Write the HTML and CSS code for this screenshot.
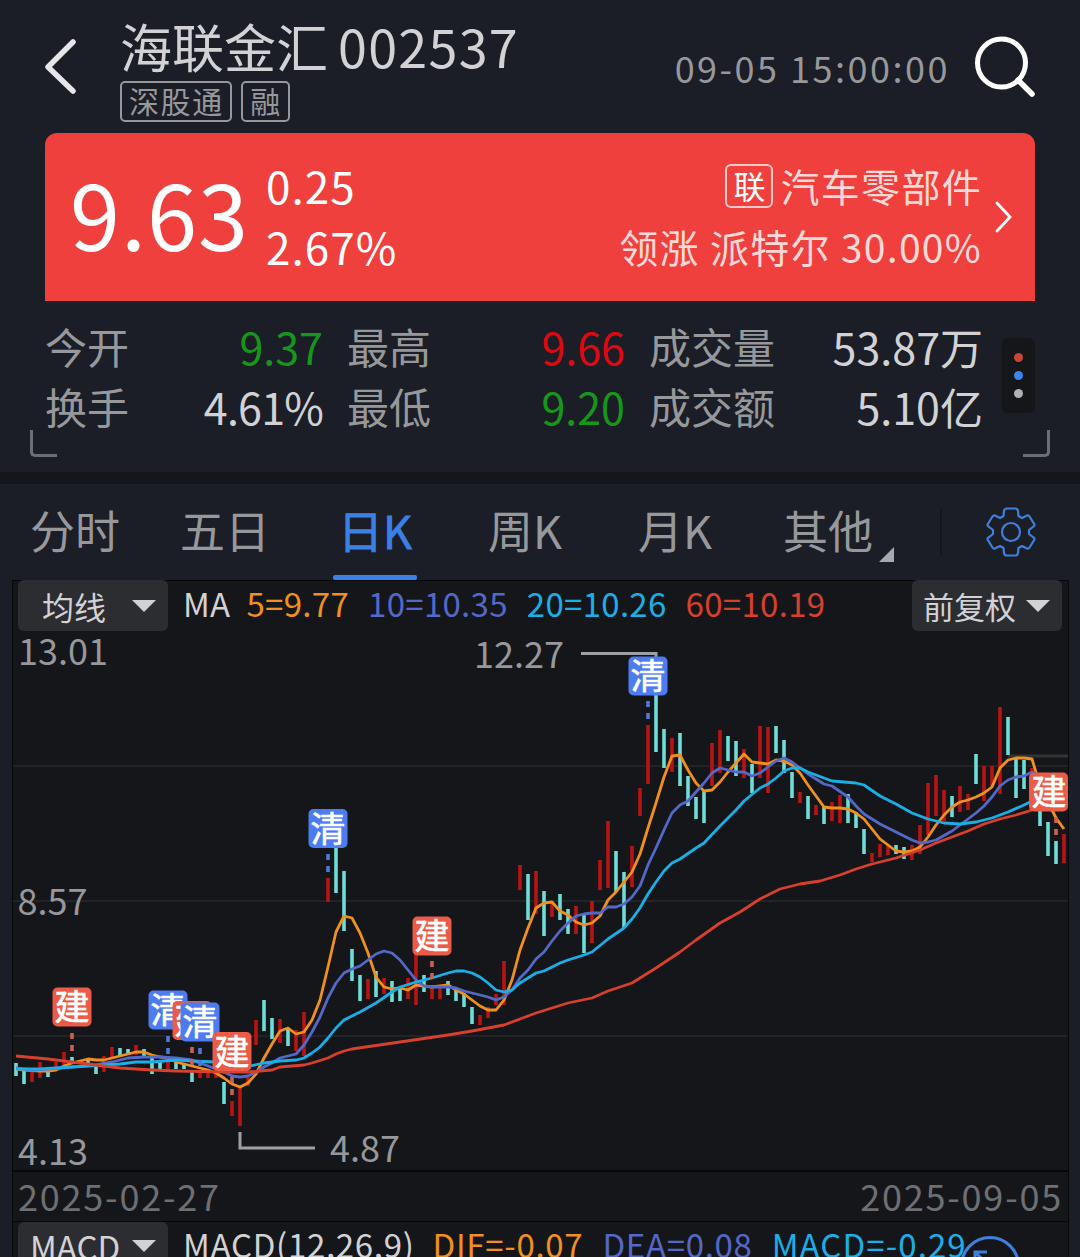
FILE: index.html
```html
<!DOCTYPE html>
<html lang="zh-CN">
<head>
    <meta charset="UTF-8">
    <title>海联金汇 002537</title>
    <link rel="stylesheet" href="styles.css">
</head>
<body>
    <div class="header">
        <svg class="back" width="34" height="56" viewBox="0 0 34 56">
            <path d="M28 3L3 28L28 52" fill="none" stroke="#e6e6e8" stroke-width="5.5" stroke-linecap="round" stroke-linejoin="round"/>
        </svg>
        <div class="title-box">
            <div class="title">海联金汇<span class="code">002537</span></div>
            <div class="tags">
                <span class="tag">深股通</span>
                <span class="tag">融</span>
            </div>
        </div>
        <div class="time">09-05 15:00:00</div>
        <svg class="search" width="62" height="62" viewBox="0 0 62 62">
            <circle cx="28.500" cy="28" r="24" fill="none" stroke="#fff" stroke-width="5"/>
            <path d="M45 45L59 59" stroke="#fff" stroke-width="5.500" stroke-linecap="round"/>
        </svg>
    </div>

    <!-- 现价 -->
    <div class="banner">
        <div class="price">9.63</div>
        <div class="change">
            <div>0.25</div>
            <div>2.67%</div>
        </div>
        <div class="industry">
            <div><span class="link-tag">联</span>汽车零部件</div>
            <div>领涨 派特尔 30.00%</div>
        </div>
        <svg class="arrow" width="20" height="34" viewBox="0 0 20 34">
            <path d="M3 3L16 17L3 31" fill="none" stroke="#fff" stroke-width="2.800" stroke-linecap="round"/>
        </svg>
    </div>

    <div class="stats">
        <div class="stats-grid">
            <div class="stat"><span class="label">今开</span><span class="value down">9.37</span></div>
            <div class="stat"><span class="label">最高</span><span class="value up">9.66</span></div>
            <div class="stat"><span class="label">成交量</span><span class="value">53.87万</span></div>
            <div class="stat"><span class="label">换手</span><span class="value pct">4.61%</span></div>
            <div class="stat"><span class="label">最低</span><span class="value down">9.20</span></div>
            <div class="stat"><span class="label">成交额</span><span class="value">5.10亿</span></div>
        </div>
        <div class="more"><i class="dot red"></i><i class="dot blue"></i><i class="dot"></i></div>
        <i class="corner left"></i>
        <i class="corner right"></i>
    </div>

    <div class="tabs">
        <div class="tab">分时</div>
        <div class="tab">五日</div>
        <div class="tab active">日K</div>
        <div class="tab">周K</div>
        <div class="tab">月K</div>
        <div class="tab other">其他</div>
        <div class="setting">
            <svg width="52" height="52" viewBox="-26 -26 52 52" fill="none" stroke="#3f80dc" stroke-width="2.200" stroke-linejoin="round">
                <path d="M-7 -21Q-6.500 -23.500 -4.500 -23.500H4.500Q6.500 -23.500 7 -21L7.500 -16L11 -14L16 -16.500Q17.500 -17 18.500 -15.500L23.200 -8Q24 -6.500 22.500 -5.500L18 -2V2L22.500 5.500Q24 6.500 23.200 8L18.500 15.500Q17.500 17 16 16.500L11 14L7.500 16L7 21Q6.500 23.500 4.500 23.500H-4.500Q-6.500 23.500 -7 21L-7.500 16L-11 14L-16 16.500Q-17.500 17 -18.500 15.500L-23.200 8Q-24 6.500 -22.500 5.500L-18 2V-2L-22.500 -5.500Q-24 -6.500 -23.200 -8L-18.500 -15.500Q-17.500 -17 -16 -16.500L-11 -14L-7.500 -16Z"/>
                <circle r="9"/>
            </svg>
        </div>
    </div>

    <div class="chart">
        <div class="bar">
            <div class="select">均线<i class="caret"></i></div>
            <span class="ind">MA</span>
            <span class="ind ma5">5=9.77</span>
            <span class="ind ma10">10=10.35</span>
            <span class="ind ma20">20=10.26</span>
            <span class="ind ma60">60=10.19</span>
            <div class="select fq">前复权<i class="caret"></i></div>
        </div>

        <!-- K线 -->
        <svg class="kline" width="1055" height="539" viewBox="13 631 1055 539">
            <path class="grid" d="M13 766H1068M13 901H1068M13 1036H1068"/>
            <path class="last" d="M1008 756H1068"/>
            <path class="k-up" d="M32 1072V1082M40 1062V1078M56 1062V1070M64 1052V1065M80 1060V1063M104 1056V1072M112 1047V1058M136 1045V1055M168 1058V1069M200 1072V1078M208 1072V1078M216 1072V1078M232 1101V1116M240 1087V1126M248 1077V1086M256 1020V1045M280 1019V1043M296 1030V1051M304 1012V1056M328 878V902M368 979V999M384 978V994M408 978V999M416 953V1005M432 985V999M440 987V999M480 1015V1025M488 1007V1018M496 994V1005M504 961V1005M520 865V890M536 871V914M552 903V917M576 906V934M592 901V943M600 860V890M608 821V888M632 846V887M640 788V816M648 725V784M672 738V772M712 743V786M720 730V773M744 749V778M760 726V778M768 727V793M800 792V803M816 805V815M832 802V821M840 795V823M872 853V862M880 844V857M888 846V855M912 845V860M920 825V854M928 783V835M936 775V816M944 790V821M960 786V812M968 794V810M984 766V801M992 766V786M1000 707V794M1032 768V800M1064 834V863"/>
            <path class="k-down" d="M16 1063V1076M24 1070V1084M48 1070V1077M72 1057V1063M88 1058V1063M96 1064V1074M120 1048V1056M128 1049V1055M144 1049V1058M152 1058V1074M160 1062V1069M176 1063V1069M184 1063V1069M192 1072V1082M224 1082V1104M264 1000V1031M272 1018V1039M288 1028V1046M336 847V893M344 871V931M352 949V981M360 975V1001M376 971V997M392 981V1002M400 987V1001M424 975V992M448 981V995M456 989V1001M464 993V1007M472 1007V1024M528 874V920M544 891V936M560 894V920M568 909V934M584 914V953M616 851V892M624 872V928M656 680V752M664 729V768M680 733V786M688 776V806M696 797V819M704 790V823M728 736V761M736 741V776M752 764V793M776 726V753M784 740V773M792 772V798M808 796V819M824 807V824M848 794V823M856 812V828M864 829V854M896 845V854M904 847V859M952 796V817M976 754V784M1008 717V755M1016 758V798M1024 760V789M1040 800V826M1048 822V856M1056 841V864"/>
            <polyline class="line ma5" points="16,1069 24,1070 40,1071 48,1071 56,1070 64,1066 72,1063 80,1061 88,1059 96,1060 104,1060 112,1058 120,1056 128,1054 136,1052 144,1052 152,1055 160,1057 168,1058 176,1062 184,1064 192,1066 200,1068 208,1070 216,1073 224,1078 232,1084 240,1087 248,1083 256,1074 264,1058 272,1044 280,1031 288,1028 296,1034 304,1032 312,1020 320,1000 328,967 336,932 344,916 352,918 360,933 368,953 376,977 384,987 392,989 400,988 408,990 416,985 424,986 432,987 440,986 448,985 456,990 464,994 472,1000 480,1006 488,1010 496,1010 504,1000 512,980 520,950 528,928 536,908 544,903 552,902 560,911 568,915 576,922 584,925 592,923 600,916 608,900 616,892 624,882 632,872 640,854 648,828 656,803 664,777 672,756 680,755 688,770 696,783 704,791 712,790 720,782 728,772 736,763 744,754 752,762 760,763 768,764 776,760 784,761 792,765 800,773 808,785 816,796 824,807 832,808 840,808 848,809 856,813 864,819 872,829 880,839 888,845 896,851 904,852 912,851 920,847 928,837 936,825 944,815 952,807 960,802 968,800 976,797 984,793 992,787 1000,768 1008,760 1016,758 1024,758 1032,759 1040,786 1048,802 1056,818 1064,829"/>
            <polyline class="line ma10" points="16,1068 32,1070 48,1069 72,1067 96,1065 112,1062 128,1058 144,1057 160,1057 176,1058 192,1060 208,1066 216,1069 224,1072 232,1076 240,1077 248,1076 256,1072 264,1067 272,1063 280,1058 288,1056 296,1054 304,1045 312,1032 320,1017 328,998 336,983 344,973 352,969 360,966 368,960 376,954 384,951 392,953 400,960 408,970 416,980 424,986 432,987 440,987 448,987 456,988 464,991 472,993 480,995 488,997 496,1000 504,997 512,990 520,978 528,970 536,959 544,952 552,941 560,931 568,923 576,916 584,914 592,913 600,913 608,907 616,907 624,904 632,897 640,886 648,865 656,848 664,830 672,813 680,805 688,801 696,792 704,783 712,773 720,768 728,770 736,772 744,772 752,776 760,773 768,767 776,761 784,758 792,762 800,768 808,774 824,784 832,786 848,797 856,806 864,814 872,819 880,824 896,832 904,836 912,840 920,843 928,842 936,840 952,831 968,819 976,813 984,806 992,797 1000,786 1008,780 1016,777 1024,776 1032,772 1040,775 1064,800"/>
            <polyline class="line ma20" points="16,1069 40,1069 56,1068 72,1067 104,1065 120,1064 136,1062 152,1062 176,1060 192,1061 216,1062 232,1066 250,1066 264,1063 280,1061 296,1060 304,1058 312,1053 320,1047 328,1038 336,1028 344,1020 360,1012 376,1003 392,992 400,987 416,982 432,978 448,973 456,971 464,971 472,973 480,977 488,983 496,990 504,992 512,990 520,983 536,973 544,971 560,963 568,960 584,955 592,952 608,939 624,928 632,919 640,908 648,894 656,882 664,871 672,863 680,859 696,848 704,843 720,826 736,810 744,801 760,788 768,784 776,778 784,771 792,768 800,768 808,772 824,778 832,781 856,783 864,785 880,796 896,804 912,813 928,819 944,823 960,824 976,822 992,818 1008,812 1024,805 1032,801 1064,795"/>
            <polyline class="line ma60" points="16,1056 48,1059 72,1062 96,1065 120,1068 152,1070 176,1071 224,1072 248,1072 272,1070 280,1067 304,1065 312,1063 328,1058 336,1054 344,1051 352,1049 400,1042 448,1035 472,1031 504,1025 520,1019 536,1013 568,1003 592,998 608,991 632,983 656,968 680,952 696,940 720,923 740,912 760,899 780,889 800,884 820,881 840,875 856,869 872,864 896,858 920,850 936,843 952,837 968,831 984,824 1000,819 1016,815 1032,810 1064,800"/>

            <path class="callout" d="M581 653.500H656V660M240 1132V1148H315"/>
            <text class="axis" x="18" y="665">13.01</text>
            <text class="axis" x="17.500" y="915">8.57</text>
            <text class="axis" x="18" y="1165">4.13</text>
            <text class="axis" x="474" y="668">12.27</text>
            <text class="axis" x="330" y="1162">4.87</text>

            <!-- 买卖点 -->
            <path class="stem buy" d="M72 1033V1051M192 1047V1065M232 1077V1096M432 961V979M1056 817V835"/>
            <path class="stem sell" d="M168 1036V1054M200 1048V1066M328 854V872M648 701V719"/>
            <g class="mark buy"><rect x="52.500" y="987.500" width="39" height="39" rx="5"/><text x="72" y="1020">建</text></g>
            <g class="mark sell"><rect x="148.500" y="990.500" width="39" height="39" rx="5"/><text x="168" y="1023">清</text></g>
            <g class="mark buy"><rect x="172.500" y="1001" width="39" height="39" rx="5"/><text x="192" y="1034">建</text></g>
            <g class="mark sell"><rect x="180.500" y="1002.500" width="39" height="39" rx="5"/><text x="200" y="1035">清</text></g>
            <g class="mark buy"><rect x="212.500" y="1032" width="39" height="39" rx="5"/><text x="232" y="1065">建</text></g>
            <g class="mark sell"><rect x="308.500" y="809" width="39" height="39" rx="5"/><text x="328" y="842">清</text></g>
            <g class="mark buy"><rect x="412.500" y="916.500" width="39" height="39" rx="5"/><text x="432" y="949">建</text></g>
            <g class="mark sell"><rect x="628.500" y="656.500" width="39" height="39" rx="5"/><text x="648" y="689">清</text></g>
            <g class="mark buy"><rect x="1029" y="772.500" width="39" height="39" rx="5"/><text x="1049" y="805">建</text></g>
        </svg>

        <div class="dates"><span>2025-02-27</span><span>2025-09-05</span></div>

        <div class="bar macd">
            <div class="select">MACD<i class="caret"></i></div>
            <span class="ind">MACD(12,26,9)</span>
            <span class="ind ma5">DIF=-0.07</span>
            <span class="ind ma10">DEA=0.08</span>
            <span class="ind ma20">MACD=-0.29</span>
            <svg class="expand" width="62" height="62" viewBox="0 0 62 62" fill="none" stroke="#3f80dc" stroke-width="3">
                <circle cx="31" cy="31" r="28.500"/>
                <path d="M16 28V17H28M16 17L28 29"/>
            </svg>
        </div>
    </div>
</body>
</html>
```
FILE: styles.css
```css
body {
    margin: 0;
    width: 1080px;
    height: 1257px;
    overflow: hidden;
    background-color: #1b1e27;
    color: #d2d2d4;
    font-family: "Noto Sans CJK SC", "Noto Sans", sans-serif;
}
.header {
    display: flex;
    height: 133px;
    padding: 0 45px;
    box-sizing: border-box;
}
.back {
    margin: 39px 41px 0 0;
}
.title {
    margin-top: 16px;
    line-height: 60px;
    font-size: 52px;
    white-space: nowrap;
}
.code {
    margin-left: 10px;
    letter-spacing: 1.3px;
}
.tags {
    display: flex;
    gap: 9px;
    margin-top: 5px;
}
.tag {
    height: 41px;
    box-sizing: border-box;
    border: 2px solid #97989b;
    border-radius: 5px;
    padding: 0 6.5px 0 7px;
    color: #97989b;
    font-size: 30px;
    line-height: 35px;
    letter-spacing: 1.6px;
}
.time {
    margin-left: auto;
    margin-top: 37px;
    line-height: 60px;
    font-size: 36px;
    letter-spacing: 2.5px;
    color: #97989b;
    white-space: nowrap;
}
.search {
    margin: 35px 0 0 23px;
}
.banner {
    display: flex;
    height: 168px;
    margin: 0 45px;
    padding: 0 21px 0 25px;
    box-sizing: border-box;
    background-color: #ef403d;
    border-radius: 12px 12px 0 0;
    color: #fff;
}
.price {
    margin-top: 29px;
    font-size: 90px;
    line-height: 100px;
    letter-spacing: 1px;
}
.change {
    margin: 22px 0 0 17px;
    font-size: 44px;
    line-height: 61px;
    letter-spacing: 1.1px;
}
.industry {
    margin: 22px 0 0 auto;
    font-size: 39px;
    line-height: 61px;
    letter-spacing: 1.3px;
    text-align: right;
    color: #ffd9d8;
}
.link-tag {
    display: inline-block;
    width: 48px;
    height: 44px;
    margin-right: 7px;
    box-sizing: border-box;
    border: 2px solid #ffc9c8;
    border-radius: 6px;
    color: #fff;
    font-size: 32px;
    line-height: 38px;
    letter-spacing: 0;
    text-align: center;
    vertical-align: 3px;
}
.arrow {
    margin: 67px 0 0 12px;
}
.stats {
    position: relative;
    display: flex;
    height: 171px;
    padding: 15px 45px 0;
    box-sizing: border-box;
}
.stats-grid {
    display: grid;
    grid-template-columns: 278px 278px 334px;
    grid-template-rows: 60px 60px;
    column-gap: 24px;
    line-height: 60px;
}
.stat {
    display: flex;
    justify-content: space-between;
}
.label {
    font-size: 42px;
    color: #97989b;
}
.value {
    font-size: 43px;
}
.value.pct {
    letter-spacing: -0.8px;
}
.down {
    color: #18961c;
}
.up {
    color: #dc0a10;
}
.more {
    display: flex;
    flex-direction: column;
    align-items: center;
    justify-content: center;
    gap: 9px;
    width: 33px;
    height: 75px;
    margin: 22px 0 0 auto;
    background-color: #15161a;
    border-radius: 6px;
}
.dot {
    width: 9px;
    height: 9px;
    border-radius: 50%;
    background-color: #b0b0b3;
}
.dot.red {
    background-color: #cc4433;
}
.dot.blue {
    background-color: #3a84f0;
}
.corner {
    position: absolute;
    top: 129px;
    width: 24px;
    height: 24px;
    border-bottom: 3px solid #6c6e73;
}
.corner.left {
    left: 30px;
    border-left: 3px solid #6c6e73;
    border-bottom-left-radius: 5px;
}
.corner.right {
    right: 30px;
    border-right: 3px solid #6c6e73;
    border-bottom-right-radius: 5px;
}
.tabs {
    display: flex;
    height: 108px;
    box-sizing: border-box;
    border-top: 12px solid #15161a;
}
.tab {
    position: relative;
    width: 150px;
    line-height: 92px;
    font-size: 45px;
    text-align: center;
    color: #97989b;
}
.tab.active {
    color: #3a80e6;
    -webkit-text-stroke: 0.8px #3a80e6;
}
.tab.active::after {
    content: "";
    position: absolute;
    left: 33px;
    bottom: 0;
    width: 84px;
    height: 5px;
    background-color: #3a80e6;
    border-radius: 2px;
}
.tab.other {
    width: 156px;
}
.tab.other::after {
    content: "";
    position: absolute;
    left: 129px;
    top: 63px;
    border-left: 15px solid transparent;
    border-bottom: 15px solid #a8a9ac;
}
.setting {
    height: 46px;
    margin: 25px 0 0 34px;
    padding-left: 43px;
    border-left: 2px solid #15161a;
}
.setting svg {
    display: block;
    margin-top: -3px;
}
.chart {
    width: 1055px;
    margin-left: 12px;
    border-left: 1px solid #07080a;
    border-right: 1px solid #07080a;
    background-color: #15161a;
}
.bar {
    display: flex;
    height: 51px;
    padding: 0 6px 0 5px;
    font-size: 33px;
    line-height: 47px;
    letter-spacing: 0.3px;
    white-space: nowrap;
    box-shadow: inset 0 1px #07080a;
}
.select {
    display: flex;
    align-items: center;
    justify-content: space-between;
    width: 150px;
    height: 51px;
    margin-right: 15px;
    padding: 0 12px 0 24px;
    box-sizing: border-box;
    background-color: #2c2d31;
    border-radius: 6px;
    font-size: 32px;
    line-height: 44px;
    letter-spacing: 0;
}
.select.fq {
    margin: 0 0 0 auto;
    padding-left: 11px;
    font-size: 31px;
}
.caret {
    border: 12px solid transparent;
    border-top-color: #d2d2d4;
    border-bottom: 0;
}
.ind {
    margin-right: 19px;
}
.bar .ind:nth-child(2) {
    margin-right: 16px;
}
.ma5 {
    color: #f0901e;
    stroke: #f0901e;
}
.ma10 {
    color: #5468c8;
    stroke: #5468c8;
}
.ma20 {
    color: #1caee6;
    stroke: #1caee6;
}
.ma60 {
    color: #d6402c;
    stroke: #d6402c;
}
.kline {
    display: block;
    overflow: visible;
}
.grid {
    stroke: #222327;
    stroke-width: 2;
}
.last {
    stroke: #333333;
    stroke-width: 3;
}
.k-up {
    stroke: #b81414;
    stroke-width: 3.6;
}
.k-down {
    stroke: #6fdcd8;
    stroke-width: 3.6;
}
.line {
    fill: none;
    stroke-width: 2.8;
    stroke-linejoin: round;
}
.callout {
    fill: none;
    stroke: #a0a0a3;
    stroke-width: 3;
}
.axis {
    font-size: 36px;
    fill: #97989b;
}
.stem {
    stroke-width: 3.6;
    stroke-dasharray: 6 6;
}
.stem.buy {
    stroke: #cc6052;
}
.stem.sell {
    stroke: #5078d8;
}
.mark text {
    fill: #fff;
    stroke: #fff;
    stroke-width: 0.6;
    font-size: 35px;
    text-anchor: middle;
}
.mark.buy rect {
    fill: #ea5b48;
}
.mark.sell rect {
    fill: #4c7cf0;
}
.dates {
    display: flex;
    justify-content: space-between;
    height: 51px;
    padding: 0 5px;
    box-sizing: border-box;
    border-top: 2px solid #07080a;
    font-size: 36px;
    line-height: 46px;
    letter-spacing: 1.8px;
    color: #6e6f73;
}
.bar.macd {
    position: relative;
    padding-top: 1px;
    line-height: 45px;
    letter-spacing: 0.7px;
}
.bar.macd .ind:nth-child(2) {
    margin-right: 18px;
}
.bar.macd .ma20 {
    letter-spacing: 1.1px;
}
.macd .select {
    padding-left: 12px;
    padding-bottom: 3px;
    font-size: 33px;
}
.expand {
    position: absolute;
    left: 946px;
    top: 14px;
}
```
